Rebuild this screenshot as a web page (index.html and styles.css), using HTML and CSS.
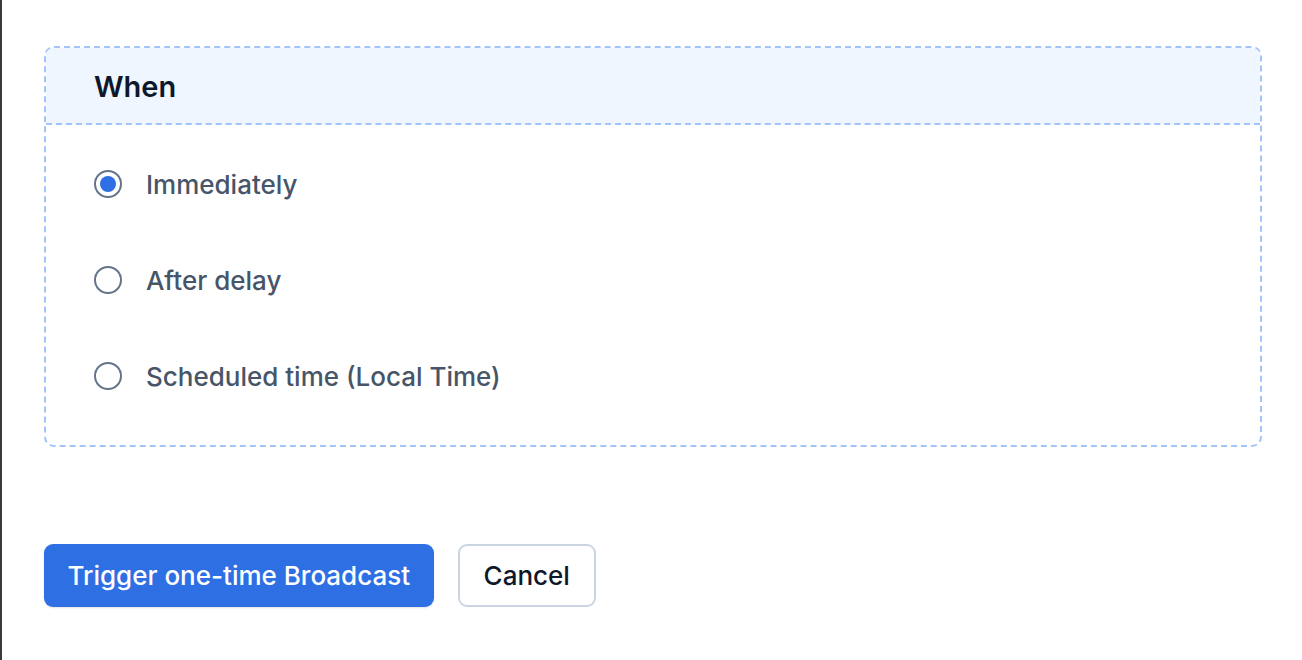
FILE: index.html
```html
<!DOCTYPE html>
<html lang="en">
<head>
    <meta charset="UTF-8">
    <title>Trigger Broadcast</title>
    <link rel="stylesheet" href="styles.css">
</head>
<body>
    <div class="page">
        <div class="when-card">
            <div class="when-header">When</div>
            <div class="when-body">
                <label class="radio-row">
                    <input type="radio" name="when" checked>
                    <span>Immediately</span>
                </label>
                <label class="radio-row">
                    <input type="radio" name="when">
                    <span>After delay</span>
                </label>
                <label class="radio-row">
                    <input type="radio" name="when">
                    <span>Scheduled time (Local Time)</span>
                </label>
            </div>
        </div>

        <div class="actions">
            <button class="btn btn-primary">Trigger one-time Broadcast</button>
            <button class="btn btn-secondary">Cancel</button>
        </div>
    </div>
</body>
</html>
```

FILE: styles.css
```css
body {
    margin: 0;
    background: #ffffff;
    font-family: Inter, "Noto Sans", sans-serif;
    color: #0f172a;
}
.page {
    min-height: 660px;
    box-sizing: border-box;
    border-left: 2px solid #3b3b3d;
    padding: 46px 40px 0 42px;
}
.when-card {
    width: 1218px;
    box-sizing: border-box;
    border: 2px dashed #a3c4fa;
    border-radius: 10px;
    overflow: hidden;
}
.when-header {
    background: #eff6ff;
    border-bottom: 2px dashed #a3c4fa;
    height: 77px;
    box-sizing: border-box;
    padding: 2px 48px 0;
    display: flex;
    align-items: center;
    font-size: 29px;
    font-weight: 600;
    color: #0f172a;
}
.when-body {
    padding: 11px 48px 21px;
    display: flex;
    flex-direction: column;
}
.radio-row {
    display: flex;
    align-items: center;
    gap: 24px;
    height: 96px;
    font-size: 26px;
    font-weight: 500;
    color: #475569;
    cursor: pointer;
}
.radio-row input {
    appearance: none;
    margin: 0;
    width: 28px;
    height: 28px;
    border: 2px solid #64748b;
    border-radius: 50%;
    box-sizing: border-box;
    background: #ffffff;
    display: flex;
    align-items: center;
    justify-content: center;
}
.radio-row input:checked::after {
    content: "";
    width: 16px;
    height: 16px;
    border-radius: 50%;
    background: #2f6fe4;
}
.actions {
    display: flex;
    gap: 24px;
    margin-top: 97px;
}
.btn {
    font-family: inherit;
    font-size: 26px;
    font-weight: 500;
    height: 63px;
    border-radius: 9px;
    padding: 0 24px;
    cursor: pointer;
}
.btn-primary {
    background: #2f6fe4;
    color: #ffffff;
    border: none;
    padding: 0 23.5px;
    box-shadow: 0 1px 2px rgba(0,0,0,0.12);
}
.btn-secondary {
    background: #ffffff;
    color: #0f172a;
    border: 2px solid #cbd5e1;
}
```
